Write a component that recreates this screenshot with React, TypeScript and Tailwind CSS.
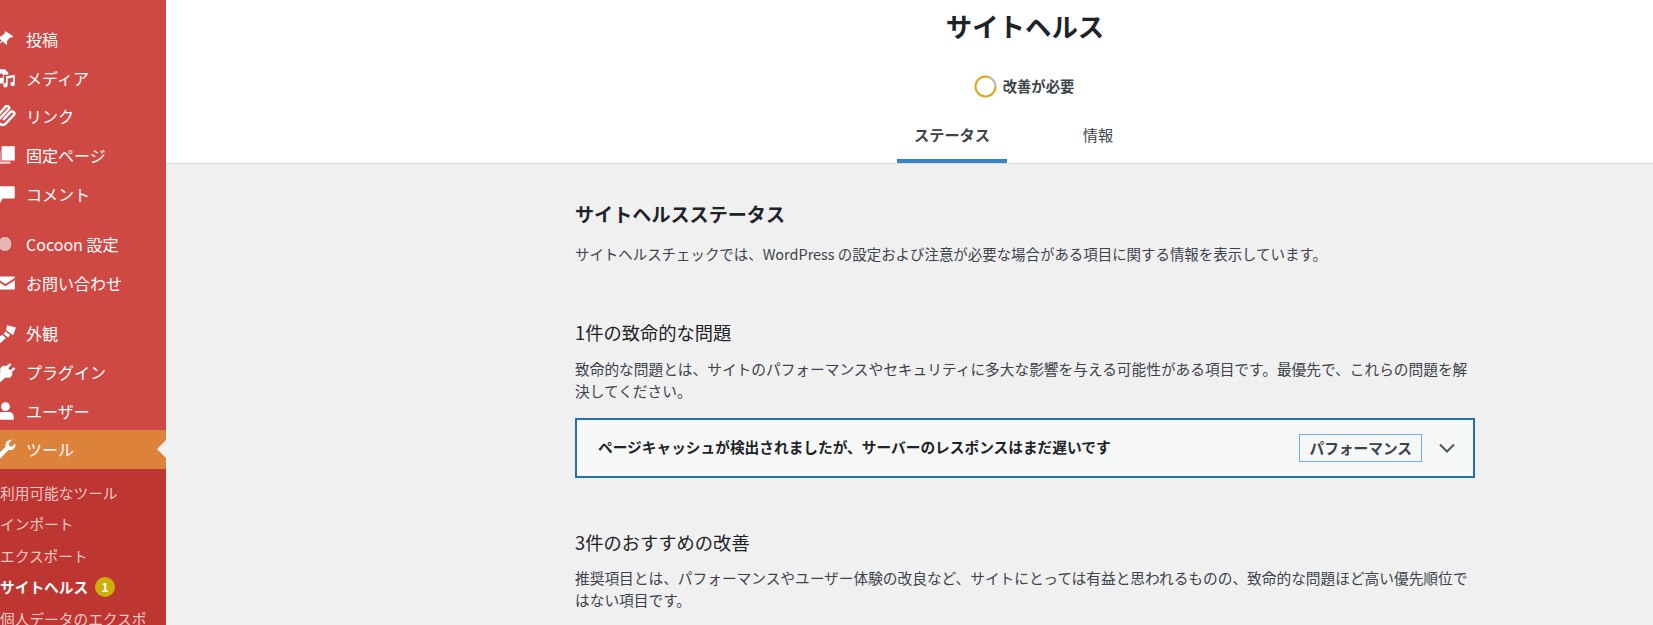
import type { ReactNode } from "react";

const FONT = { fontFamily: '"Noto Sans CJK JP", "Noto Sans", sans-serif' };

function MenuIcon({ children }: { children: ReactNode }) {
  return (
    <svg className="w-[22px] h-[22px] -ml-[5px] mr-[9px] shrink-0" viewBox="0 0 20 20" fill="currentColor">
      {children}
    </svg>
  );
}

interface MenuItem {
  label: string;
  icon: ReactNode;
  gap?: boolean;
  active?: boolean;
}

const menu: MenuItem[] = [
  { label: "投稿", icon: <path d="M10.4 3.3l6.2 4.2-1.3 1.4c-.6-.3-1.3-.3-1.9 0l-2.6 3.1c.4 1 .3 2.3-.3 3.4L6.8 12l-4 4.2-1.3.6.6-1.4 4-4.1L2.4 8.2c1-.8 2.2-1 3.3-.6l3-2.7c.3-.6.3-1.2 0-1.8z" /> },
  { label: "メディア", icon: <path fillRule="evenodd" d="M3 2h6l3 3v2H8v8H3a2 2 0 0 1-2-2V4a2 2 0 0 1 2-2zm2.5 4a2 2 0 1 0 0 4 2 2 0 0 0 0-4zM10 8.5l8-1.5v8.5a2 2 0 1 1-1.5-1.9V9.5l-5 1v6a2 2 0 1 1-1.5-1.9z" /> },
  { label: "リンク", icon: <path fill="none" stroke="currentColor" strokeWidth="2.2" strokeLinecap="round" d="M8 13l6-6.500a2 2 0 0 1 3 2.700l-7.500 8a3.500 3.500 0 0 1-5-5l8-8.500a1.800 1.800 0 0 0-3-2L3 9" /> },
  { label: "固定ページ", icon: <><path d="M6 2h12v13H6z" /><path opacity="0.75" d="M2 6h3v10h9v2H2z" /></> },
  { label: "コメント", icon: <path d="M3 3h14a1 1 0 0 1 1 1v9a1 1 0 0 1-1 1h-3l-1 0-6 0-3 5v-5H3a1 1 0 0 1-1-1V4a1 1 0 0 1 1-1z" /> },
  { label: "Cocoon 設定", gap: true, icon: <ellipse cx="9" cy="10" rx="6.500" ry="7" fill="#eab4b2" stroke="#a83c38" strokeWidth="0.8" /> },
  { label: "お問い合わせ", icon: <><path d="M1 4h17v1.500l-8.500 5.500L1 5.500z" /><path d="M1 7.500l8.500 5.500L18 7.500V16H1z" /></> },
  { label: "外観", gap: true, icon: <path d="M11 3l8 2-2.500 7-6.500-4.500zM9.200 8.700l4.500 3-1.800 2.300-4-3zM6.500 11.500l3.500 3-5 4.500-3.500-3z" /> },
  { label: "プラグイン", icon: <path d="M13.500 2l1.500 1.500-3 3L14 8.500l3-3L18.500 7l-3.500 3.500 1 1-1.500 3c-1.500 1-3.500 1-5 .5L5 19H1v-4l4-4.500c-.5-1.500-.5-3.500.5-5l3-1.500 1 1z" /> },
  { label: "ユーザー", icon: <><circle cx="9.500" cy="6" r="4" /><path d="M2 18v-3c0-2 2-4 4-4h7c2 0 4 2 4 4v3z" /></> },
  { label: "ツール", active: true, icon: <path d="M18.500 5c.5 2-.3 4-2 5.200-1.300.8-2.800 1-4 .5L5 18.500c-.8.8-2.200.8-3-.1-.8-.8-.8-2 0-2.900l7.700-7.500c-.5-1.300-.3-2.900.6-4.200C11.500 2 13.500 1.200 15.500 1.700L12.500 4.700l.5 2.500 2.500.5z" /> },
];

const submenu = ["利用可能なツール", "インポート", "エクスポート"];

function Sidebar() {
  return (
    <aside className="w-[166px] shrink-0 h-[625px] overflow-hidden bg-[#cf4944] text-white text-[16px] pt-[20px]">
      {menu.map((item) => (
        <div key={item.label} className={item.gap ? "mt-[12px]" : ""}>
          <div className={`relative flex items-center h-[38.600px] overflow-hidden ${item.active ? "bg-[#dd823b]" : ""}`}>
            <MenuIcon>{item.icon}</MenuIcon>
            <span className="whitespace-nowrap">{item.label}</span>
            {item.active && (
              <span className="absolute right-0 top-1/2 -translate-y-1/2 border-y-[9px] border-y-transparent border-r-[9px] border-r-[#f0f0f1]" />
            )}
          </div>
        </div>
      ))}
      <ul className="bg-[#be3631] h-[200px] pt-[8px] text-[14.700px] text-[#f1c8c7] overflow-hidden">
        {submenu.map((s) => (
          <li key={s} className="h-[31.500px] leading-[31.500px] whitespace-nowrap">{s}</li>
        ))}
        <li className="h-[31.500px] leading-[31.500px] whitespace-nowrap font-bold text-white flex items-center">
          サイトヘルス
          <span className="ml-[7px] w-[20px] h-[20px] rounded-full bg-[#ccaf0b] text-white text-[12px] leading-[20px] text-center">1</span>
        </li>
        <li className="h-[31.500px] leading-[31.500px] whitespace-nowrap overflow-hidden">個人データのエクスポ</li>
      </ul>
    </aside>
  );
}

function Header() {
  return (
    <header className="bg-white border-b border-[#dcdcde] h-[164px]">
      <h1 className="text-[26.400px] font-bold text-[#1d2327] leading-[40px] text-center pt-[6px] h-[62px]">サイトヘルス</h1>
      <div className="flex items-center justify-center gap-[6px] mt-[12px] h-[24px]">
        <svg className="w-[23px] h-[23px] -ml-[2px]" viewBox="0 0 23 23" fill="none" strokeWidth="2">
          <circle cx="11.500" cy="11.500" r="10" stroke="#dba617" />
          <path d="M15 2.100a10 10 0 0 1 6.500 9.400" stroke="#c3c4c7" />
        </svg>
        <span className="text-[14.300px] font-bold text-[#3c434a]">改善が必要</span>
      </div>
      <nav className="grid grid-cols-[110px_110px] gap-x-[36px] justify-center mt-[21px] text-[15.200px] text-[#3c434a]">
        <div className="h-[44px] pt-[4px] text-center font-bold border-b-4 border-[#3582c4]">ステータス</div>
        <div className="h-[44px] pt-[4px] text-center">情報</div>
      </nav>
    </header>
  );
}

function Content() {
  return (
    <section className="w-[900px] mx-auto text-[14.700px] leading-[22.500px] text-[#3c434a]">
      <h2 className="text-[19.100px] font-bold text-[#1d2327] mt-[35px] leading-[30px]">サイトヘルスステータス</h2>
      <p className="mt-[14px] text-[14.450px]">サイトヘルスチェックでは、WordPress の設定および注意が必要な場合がある項目に関する情報を表示しています。</p>
      <h3 className="text-[18.300px] text-[#1d2327] mt-[52px] leading-[28px]">1件の致命的な問題</h3>
      <p className="mt-[12px]">致命的な問題とは、サイトのパフォーマンスやセキュリティに多大な影響を与える可能性がある項目です。最優先で、これらの問題を解決してください。</p>
      <div className="mt-[15px] h-[60px] border-2 border-[#2271b1] bg-[#f6f7f7] flex items-center pl-[21px] pr-[17px]">
        <span className="flex-1 font-bold text-[#1d2327]">ページキャッシュが検出されましたが、サーバーのレスポンスはまだ遅いです</span>
        <span className="border border-[#72aee6] h-[28px] leading-[25px] px-[9px] font-bold text-[#3c434a]">パフォーマンス</span>
        <svg className="w-[18px] h-[12px] ml-[16px] text-[#50575e]" viewBox="0 0 18 12" fill="none" stroke="currentColor" strokeWidth="2">
          <path d="M2 2.500l7 7 7-7" />
        </svg>
      </div>
      <h3 className="text-[18.300px] text-[#1d2327] mt-[50px] leading-[28px]">3件のおすすめの改善</h3>
      <p className="mt-[11px]">推奨項目とは、パフォーマンスやユーザー体験の改良など、サイトにとっては有益と思われるものの、致命的な問題ほど高い優先順位ではない項目です。</p>
    </section>
  );
}

export default function App() {
  return (
    <div className="flex w-[1653px] h-[625px] overflow-hidden bg-[#f0f0f1]" style={FONT}>
      <Sidebar />
      <main className="w-[1718px] shrink-0">
        <Header />
        <Content />
      </main>
    </div>
  );
}
